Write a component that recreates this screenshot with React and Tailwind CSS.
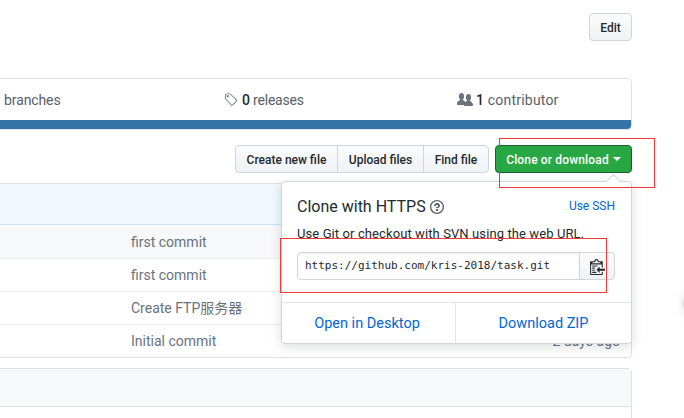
import React from 'react';

const commits = ['first commit', 'first commit', 'Create FTP服务器', 'Initial commit'];

const sans = 'font-["Roboto","Noto_Sans_CJK_SC",sans-serif]';

function TagIcon() {
  return (
    <svg width="14" height="16" viewBox="0 0 15 16" fill="#6a737d">
      <path fillRule="evenodd" d="M7.73 1.73C7.26 1.26 6.62 1 5.96 1H3.5C2.13 1 1 2.13 1 3.5v2.47c0 .66.27 1.3.73 1.77l6.06 6.06c.39.39 1.02.39 1.41 0l4.59-4.59a.996.996 0 0 0 0-1.41L7.73 1.73zM2.38 7.09c-.31-.3-.47-.7-.47-1.13V3.5c0-.88.72-1.59 1.59-1.59h2.47c.42 0 .83.16 1.13.47l6.14 6.13-4.73 4.73-6.13-6.15zM3.01 3h2v2H3V3h.01z" />
    </svg>
  );
}

function PeopleIcon() {
  return (
    <svg width="16" height="16" viewBox="0 0 16 16" fill="#6a737d">
      <path fillRule="evenodd" d="M16 12.999c0 .439-.45 1-1 1H7.995c-.539 0-.994-.447-.995-.999H1c-.54 0-1-.561-1-1 0-2.634 3-4 3-4s.229-.409 0-1c-.841-.621-1.058-.59-1-3 .058-2.419 1.367-3 2.5-3s2.442.58 2.5 3c.058 2.41-.159 2.379-1 3-.229.59 0 1 0 1s1.549.711 2.42 2.088C9.196 9.369 10 8.999 10 8.999s.229-.409 0-1c-.841-.62-1.058-.59-1-3 .058-2.419 1.367-3 2.5-3s2.437.581 2.495 3c.059 2.41-.158 2.38-1 3-.229.59 0 1 0 1s3.005 1.366 3.005 4z" />
    </svg>
  );
}

function ClippyIcon() {
  return (
    <svg width="15" height="17" viewBox="0 0 14 16" fill="#24292e">
      <path fillRule="evenodd" d="M2 13h4v1H2v-1zm5-6H2v1h5V7zm2 3V8l-3 3 3 3v-2h5v-2H9zM4.5 9H2v1h2.5V9zM2 12h2.5v-1H2v1zm9 1h1v2c-.02.28-.11.52-.3.7-.19.18-.42.28-.7.3H1c-.55 0-1-.45-1-1V4c0-.55.45-1 1-1h3c0-1.11.89-2 2-2 1.11 0 2 .89 2 2h3c.55 0 1 .45 1 1v5h-1V6H1v9h10v-2zM2 5h8c0-.55-.45-1-1-1H8c-.55 0-1-.45-1-1s-.45-1-1-1-1 .45-1 1-.45 1-1 1H3c-.55 0-1 .45-1 1z" />
    </svg>
  );
}

function QuestionIcon() {
  return (
    <svg width="14" height="16" viewBox="0 0 14 16" fill="#586069">
      <path fillRule="evenodd" d="M6 10h2v2H6v-2zm4-3.5C10 8.64 8 9 8 9H6c0-.55.45-1 1-1h.5c.28 0 .5-.22.5-.5v-1c0-.28-.22-.5-.5-.5h-1c-.28 0-.5.22-.5.5V7H4c0-1.5 1.5-3 3-3s3 1 3 2.5zM7 2.3c3.14 0 5.7 2.56 5.7 5.7s-2.56 5.7-5.7 5.7A5.71 5.71 0 0 1 1.3 8c0-3.14 2.56-5.7 5.7-5.7zM7 1C3.14 1 0 4.14 0 8s3.14 7 7 7 7-3.14 7-7-3.14-7-7-7z" />
    </svg>
  );
}

const btn = 'h-7 pt-px flex items-center justify-center text-xs font-medium text-[#24292e] bg-gradient-to-b from-[#fafbfc] to-[#eff3f6] border border-[#d1d5da]';

export default function App() {
  return (
    <div className={`relative w-[684px] h-[418px] overflow-hidden bg-white ${sans}`}>
      <div className="pr-[52px] pt-[13px]">
        <div className="flex justify-end">
          <button className={`${btn} w-[43px] rounded`}>Edit</button>
        </div>

        {/* Numbers summary */}
        <div className="mt-[37px] -ml-px border border-[#dfe2e5] rounded-r bg-white">
          <div className="h-[41px] flex items-center text-sm text-[#586069]">
            <span className="ml-[4px] w-[220px] tracking-[-0.1px]">branches</span>
            <span className="w-[233px] flex items-center gap-[4px]"><TagIcon /><span className="tracking-[-0.2px]"><b className="font-medium text-[#24292e]">0</b> releases</span></span>
            <span className="flex items-center gap-[3px]"><PeopleIcon /><span className="tracking-[0.2px]"><b className="font-medium text-[#24292e]">1</b> contributor</span></span>
          </div>
          <div className="h-[9px] bg-[#3572a5] rounded-br" />
        </div>

        {/* File actions */}
        <div className="mt-[15px] flex justify-end">
          <button className={`${btn} w-[103px] rounded-l`}>Create new file</button>
          <button className={`${btn} w-[87px] -ml-px`}>Upload files</button>
          <button className={`${btn} w-[66px] -ml-px rounded-r`}>Find file</button>
          <button className="ml-[6px] h-7 pt-px w-[137px] flex items-center justify-center gap-1 rounded text-xs font-medium tracking-[0.15px] text-white bg-[#28a745] border border-[#1b5e2c]">
            Clone or download
            <span className="mt-[-1px] border-x-[4px] border-t-[4px] border-x-transparent border-t-white" />
          </button>
        </div>

        {/* File table */}
        <div className="mt-[10px] -ml-px border border-[#dfe2e5] rounded-r">
          <div className="h-[41px] bg-[#f1f8ff] border-b border-[#c8e1ff]" />
          {commits.map((c, i) => (
            <div key={i} className={`h-[33px] flex items-center justify-between pl-[131px] pr-[11px] text-sm text-[#6a737d] ${i === 0 ? 'bg-[#f6f8fa]' : ''} ${i > 0 ? 'border-t border-[#eaecef]' : ''}`}>
              <span>{c}</span>
              <span>2 days ago</span>
            </div>
          ))}
        </div>

        <div className="mt-[10px] -ml-px border border-[#dfe2e5] rounded-tr">
          <div className="h-[38px] bg-[#f6f8fa] border-b border-[#dfe2e5]" />
          <div className="h-[20px]" />
        </div>
      </div>

      {/* Clone popover */}
      <div className="absolute left-[281px] top-[181px] w-[351px] h-[163px] bg-white border border-[#d1d5da] rounded shadow-[0_3px_12px_rgba(27,31,35,0.15)] flex flex-col">
        <span className="absolute -top-[6px] right-[12px] w-[11px] h-[11px] rotate-45 bg-white border-l border-t border-[#d1d5da]" />
        <div className="relative flex-1 pl-[15px] pr-4 pt-[13px]">
          <div className="flex items-start justify-between">
            <div className="flex items-center gap-[4px] text-base text-[#24292e]">
              Clone with HTTPS <QuestionIcon />
            </div>
            <a className="mt-[1px] text-xs leading-5 text-[#0366d6]">Use SSH</a>
          </div>
          <p className="mt-[6px] text-[13px] leading-[18px] tracking-[0.1px] text-[#24292e]">Use Git or checkout with SVN using the web URL.</p>
          <div className="mt-[9px] flex h-7 w-[318px]">
            <div className="flex-1 flex items-center px-[7px] border border-[#d1d5da] rounded-l shadow-[inset_0_1px_2px_rgba(27,31,35,0.075)] font-['DejaVu_Sans_Mono',monospace] text-[11px] text-[#24292e]">
              https://github.com/kris-2018/task.git
            </div>
            <button className="-ml-px w-[36px] flex items-center justify-center rounded-r border border-[#d1d5da] bg-gradient-to-b from-[#fafbfc] to-[#eff3f6]">
              <ClippyIcon />
            </button>
          </div>
        </div>
        <div className="h-[41px] pt-[2px] flex border-t border-[#e1e4e8] text-[14.5px] text-[#0366d6]">
          <a className="w-[173px] pr-[3px] flex items-center justify-center">Open in Desktop</a>
          <span className="-mt-[2px] w-px bg-[#e1e4e8]" />
          <a className="flex-1 flex items-center justify-center">Download ZIP</a>
        </div>
      </div>

      {/* Red annotation boxes drawn on the screenshot */}
      <div className="absolute left-[499px] top-[138px] w-[156px] h-[50px] border border-[#f03a3a]" />
      <div className="absolute left-[280px] top-[238px] w-[327px] h-[55px] border border-[#f03a3a]" />

      <div className="absolute -right-[26px] top-[290px] w-[27px] h-[27px] rounded-full bg-white border border-[#ccc] shadow-[0_0_12px_rgba(0,0,0,0.12)]" />
    </div>
  );
}
